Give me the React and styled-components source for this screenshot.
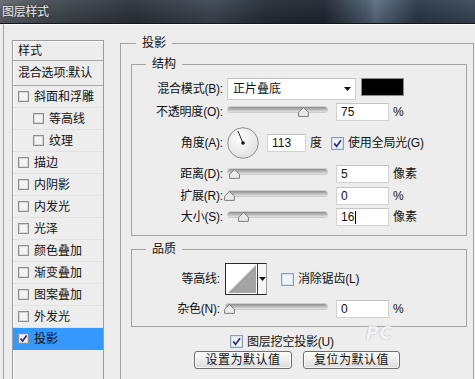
import React from 'react';
import styled, { createGlobalStyle } from 'styled-components';

const Global = createGlobalStyle`
  html, body { margin: 0; padding: 0; background: #ededed; }
  body {
    font-family: "Liberation Sans", "Noto Sans CJK SC", sans-serif;
    font-size: 12px;
    line-height: 16px;
    color: #111;
  }
  * { box-sizing: border-box; }
`;

const Window = styled.div`
  position: relative;
  width: 475px;
  height: 379px;
  overflow: hidden;
  background: #ededed;
  display: flex;
  flex-direction: column;
`;

const TitleBar = styled.div`
  flex: none;
  height: 24px;
  display: flex;
  align-items: center;
  padding-left: 2px;
  color: #ececec;
  font-size: 12px;
  letter-spacing: -0.3px;
  text-shadow: 0 0 3px rgba(0, 0, 0, 0.6);
  border-bottom: 1px solid #10161c;
  background:
    linear-gradient(180deg, rgba(255, 255, 255, 0.05), rgba(0, 0, 0, 0.18)),
    linear-gradient(90deg, #63686f 0%, #454c54 10%, #2b333c 28%, #3d4752 45%, #242d37 56%, #1e2630 68%, #4a5b6d 77%, #5c6f83 79%, #2b3947 88%, #3b4959 100%);
`;

const Body = styled.div`
  flex: 1;
  display: flex;
  align-items: flex-start;
  margin-left: 3px;
  border-left: 1px solid #a3a3a3;
  border-top: 1px solid #fbfbfb;
  padding-left: 8px;
`;

const StyleList = styled.div`
  flex: none;
  width: 92px;
  height: 420px;
  margin-top: 15px;
  border: 1px solid #9c9c9c;
  box-shadow: inset 1px 1px 0 #fff;
  display: flex;
  flex-direction: column;
`;

const ListHeader = styled.div`
  height: 20px;
  padding-left: 5px;
  display: flex;
  align-items: center;
  border-bottom: 1px solid #a8a8a8;
`;

const ListBlend = styled(ListHeader)`
  height: 25px;
  white-space: nowrap;
  letter-spacing: -0.2px;
`;

const EffectRow = styled.div`
  height: 22px;
  display: flex;
  align-items: center;
  gap: 5px;
  padding-left: ${(p) => (p.$indent ? 20 : 5)}px;
  border-bottom: 1px solid ${(p) => (p.$selected ? '#3399ff' : '#e2e2e2')};
  background: ${(p) => (p.$selected ? '#3399ff' : 'transparent')};
  white-space: nowrap;
`;

const BoxSvg = styled.svg`
  flex: none;
  display: block;
`;

function CheckBox({ checked, small }) {
  const s = small ? 11 : 13;
  return (
    <BoxSvg width={s} height={s} viewBox={`0 0 ${s} ${s}`}>
      <rect x="0.5" y="0.5" width={s - 1} height={s - 1} fill={small ? '#f4f4f4' : '#eef3f8'} stroke={small ? '#8e8e8e' : '#8ba0b6'} />
      <rect x="1.5" y="1.5" width={s - 3} height={s - 3} fill="none" stroke={small ? '#d6d6d6' : '#d3dfeb'} />
      {checked && (
        <path
          d={small ? 'M2.6 5.4 L4.6 8 L8.6 2.6' : 'M3.2 6.4 L5.6 9.4 L10 3.2'}
          fill="none"
          stroke="#2e2a7a"
          strokeWidth="1.7"
        />
      )}
    </BoxSvg>
  );
}

const OuterGroup = styled.fieldset`
  flex: none;
  width: 354px;
  height: 420px;
  margin: 10px 0 0 16px;
  padding: 0;
  min-width: 0;
  border: 1px solid #a4a4a4;
`;

const Group = styled.fieldset`
  margin: ${(p) => p.$mt}px 0 0 0;
  padding: 0;
  min-width: 0;
  border: 1px solid #a4a4a4;
`;

const Legend = styled.legend`
  margin-left: ${(p) => p.$ml}px;
  padding: 0 6px;
  font-size: 12px;
  line-height: 16px;
`;

const OuterInner = styled.div`
  padding: 5px 6px 0 10px;
  display: flex;
  flex-direction: column;
`;

const GroupBody = styled.div`
  padding: ${(p) => p.$pt}px 0 ${(p) => p.$pb}px 0;
  display: flex;
  flex-direction: column;
`;

const FormRow = styled.div`
  display: flex;
  align-items: center;
  height: ${(p) => p.$h}px;
  margin-top: ${(p) => p.$mt || 0}px;
  white-space: nowrap;
`;

const Label = styled.div`
  flex: none;
  width: ${(p) => p.$w}px;
  margin-right: ${(p) => p.$gap}px;
  text-align: right;
  white-space: nowrap;
  letter-spacing: -0.2px;
`;

const Select = styled.div`
  flex: none;
  width: 129px;
  height: 22px;
  display: flex;
  align-items: center;
  justify-content: space-between;
  padding: 0 4px 0 5px;
  background: #fff;
  border: 1px solid #cfcfcf;
  border-top-color: #c2c2c2;
`;

const ArrowSvg = styled.svg`
  display: block;
  flex: none;
`;

const DownArrow = () => (
  <ArrowSvg width="7" height="4" viewBox="0 0 7 4">
    <path d="M0 0 H7 L3.5 4 Z" fill="#111" />
  </ArrowSvg>
);

const Swatch = styled.div`
  flex: none;
  align-self: flex-start;
  width: 43px;
  height: 18px;
  margin-left: 5px;
  background: #000;
  border: 1px solid #8a8a8a;
`;

const SliderWrap = styled.div`
  position: relative;
  flex: none;
  width: ${(p) => p.$w}px;
  height: 18px;
  margin-right: 9px;
`;

const Track = styled.div`
  margin: 4px 0 0 1px;
  height: 5px;
  border-radius: 3px;
  background: linear-gradient(180deg, #8e8e8e 0%, #b4b4b4 45%, #e2e2e2 100%);
  box-shadow: 0 0 0 1px rgba(150, 150, 150, 0.35);
`;

const ThumbSvg = styled.svg`
  position: absolute;
  top: 4px;
  left: ${(p) => p.$x - 5.5}px;
  display: block;
`;

function Slider({ width = 100, thumb }) {
  return (
    <SliderWrap $w={width}>
      <Track />
      <ThumbSvg $x={thumb} width="11" height="10" viewBox="0 0 11 10">
        <path d="M5.5 0.6 L10.4 5.2 V9.4 H0.6 V5.2 Z" fill="#e9e9e9" stroke="#7d7d7d" strokeWidth="1" />
      </ThumbSvg>
    </SliderWrap>
  );
}

const Field = styled.div`
  flex: none;
  width: ${(p) => p.$w || 53}px;
  height: 18px;
  display: flex;
  align-items: center;
  padding-left: 4px;
  background: #fff;
  border: 1px solid #d2d2d2;
  border-top-color: #c4c4c4;
  font-size: 12px;
`;

const Caret = styled.span`
  display: inline-block;
  width: 1px;
  height: 13px;
  margin-left: 1px;
  background: #000;
`;

const Unit = styled.span`
  margin-left: ${(p) => p.$ml || 4}px;
`;

const DialSvg = styled.svg`
  flex: none;
  display: block;
`;

function Dial({ angle }) {
  const r = (angle * Math.PI) / 180;
  const x = 16 + Math.cos(r) * 13;
  const y = 16 - Math.sin(r) * 13;
  return (
    <DialSvg width="32" height="32" viewBox="0 0 32 32">
      <defs>
        <radialGradient id="dialFill" cx="40%" cy="35%" r="70%">
          <stop offset="0" stopColor="#ffffff" />
          <stop offset="1" stopColor="#dedede" />
        </radialGradient>
      </defs>
      <circle cx="16" cy="16" r="15.3" fill="url(#dialFill)" stroke="#8f8f8f" strokeWidth="1" />
      <line x1="16" y1="16" x2={x} y2={y} stroke="#222" strokeWidth="1" />
      <circle cx="16" cy="16" r="1.8" fill="#111" />
    </DialSvg>
  );
}

const InlineCheck = styled.div`
  display: flex;
  align-items: center;
  gap: 4px;
  margin-left: ${(p) => p.$ml}px;
  white-space: nowrap;
  letter-spacing: -0.2px;
`;

const ContourBox = styled.div`
  flex: none;
  width: 42px;
  height: 32px;
  display: flex;
  border: 1px solid #2a2a2a;
  border-right-color: #9a9a9a;
  background: #fff;
`;

const ContourArrow = styled.div`
  flex: 1;
  display: flex;
  align-items: center;
  justify-content: center;
  border-left: 1px solid #3a3a3a;
  background: #f7f7f7;
`;

const ButtonRow = styled.div`
  display: flex;
  gap: 11px;
  margin: 3px 0 0 63px;
`;

const Button = styled.div`
  width: ${(p) => p.$w}px;
  height: 18px;
  display: flex;
  align-items: center;
  justify-content: center;
  border: 1px solid #6f6f6f;
  border-radius: 3px;
  background: linear-gradient(180deg, #fbfbfb 0%, #eeeeee 50%, #dadada 100%);
  box-shadow: inset 0 0 0 1px rgba(255, 255, 255, 0.7);
  letter-spacing: 0.5px;
`;

const Watermark = styled.div`
  position: absolute;
  left: 366px;
  top: 325px;
  font-family: "DejaVu Sans", sans-serif;
  font-style: italic;
  font-weight: bold;
  font-size: 17px;
  letter-spacing: 1px;
  color: #f6f6f6;
  text-shadow: 0 0 1px #a8a8a8, 0 0 1px #a8a8a8;
  opacity: 0.85;
  pointer-events: none;
`;

const effects = [
  { name: '斜面和浮雕' },
  { name: '等高线', indent: true },
  { name: '纹理', indent: true },
  { name: '描边' },
  { name: '内阴影' },
  { name: '内发光' },
  { name: '光泽' },
  { name: '颜色叠加' },
  { name: '渐变叠加' },
  { name: '图案叠加' },
  { name: '外发光' },
  { name: '投影', checked: true, selected: true },
];

export default function App() {
  return (
    <>
      <Global />
      <Window>
        <TitleBar>图层样式</TitleBar>
        <Body>
          <StyleList>
            <ListHeader>样式</ListHeader>
            <ListBlend>混合选项:默认</ListBlend>
            {effects.map((e) => (
              <EffectRow key={e.name} $indent={e.indent} $selected={e.selected}>
                <CheckBox small checked={e.checked} />
                <span>{e.name}</span>
              </EffectRow>
            ))}
          </StyleList>

          <OuterGroup>
            <Legend $ml={15}>投影</Legend>
            <OuterInner>
              <Group $mt={0}>
                <Legend $ml={14}>结构</Legend>
                <GroupBody $pt={6} $pb={9}>
                  <FormRow $h={22}>
                    <Label $w={91} $gap={4}>混合模式(B):</Label>
                    <Select>
                      <span>正片叠底</span>
                      <DownArrow />
                    </Select>
                    <Swatch />
                  </FormRow>
                  <FormRow $h={18} $mt={3}>
                    <Label $w={91} $gap={4}>不透明度(O):</Label>
                    <Slider thumb={76} />
                    <Field>75</Field>
                    <Unit>%</Unit>
                  </FormRow>
                  <FormRow $h={32} $mt={6}>
                    <Label $w={91} $gap={4}>角度(A):</Label>
                    <Dial angle={113} />
                    <Field $w={39} style={{ marginLeft: 8 }}>113</Field>
                    <Unit>度</Unit>
                    <InlineCheck $ml={9}>
                      <CheckBox checked />
                      <span>使用全局光(G)</span>
                    </InlineCheck>
                  </FormRow>
                  <FormRow $h={18} $mt={6}>
                    <Label $w={91} $gap={4}>距离(D):</Label>
                    <Slider thumb={7.5} />
                    <Field>5</Field>
                    <Unit>像素</Unit>
                  </FormRow>
                  <FormRow $h={18} $mt={4}>
                    <Label $w={91} $gap={4}>扩展(R):</Label>
                    <Slider thumb={2.5} />
                    <Field>0</Field>
                    <Unit>%</Unit>
                  </FormRow>
                  <FormRow $h={18} $mt={3}>
                    <Label $w={91} $gap={4}>大小(S):</Label>
                    <Slider thumb={16} />
                    <Field>
                      16
                      <Caret />
                    </Field>
                    <Unit>像素</Unit>
                  </FormRow>
                </GroupBody>
              </Group>

              <Group $mt={5}>
                <Legend $ml={14}>品质</Legend>
                <GroupBody $pt={6} $pb={8}>
                  <FormRow $h={32}>
                    <Label $w={88} $gap={5}>等高线:</Label>
                    <ContourBox>
                      <svg width="31" height="30" viewBox="0 0 31 30" style={{ display: 'block' }}>
                        <rect x="0" y="0" width="31" height="30" fill="#fff" />
                        <path d="M2 29 L30 1 L30 29 Z" fill="#a4a4a4" />
                      </svg>
                      <ContourArrow>
                        <DownArrow />
                      </ContourArrow>
                    </ContourBox>
                    <InlineCheck $ml={14}>
                      <CheckBox />
                      <span>消除锯齿(L)</span>
                    </InlineCheck>
                  </FormRow>
                  <FormRow $h={18} $mt={5}>
                    <Label $w={88} $gap={5}>杂色(N):</Label>
                    <Slider width={102} thumb={4.5} />
                    <Field>0</Field>
                    <Unit>%</Unit>
                  </FormRow>
                </GroupBody>
              </Group>

              <FormRow $h={13} $mt={8}>
                <InlineCheck $ml={99}>
                  <CheckBox checked />
                  <span>图层挖空投影(U)</span>
                </InlineCheck>
              </FormRow>
              <ButtonRow>
                <Button $w={98}>设置为默认值</Button>
                <Button $w={97}>复位为默认值</Button>
              </ButtonRow>
            </OuterInner>
          </OuterGroup>
        </Body>
        <Watermark>PC</Watermark>
      </Window>
    </>
  );
}
